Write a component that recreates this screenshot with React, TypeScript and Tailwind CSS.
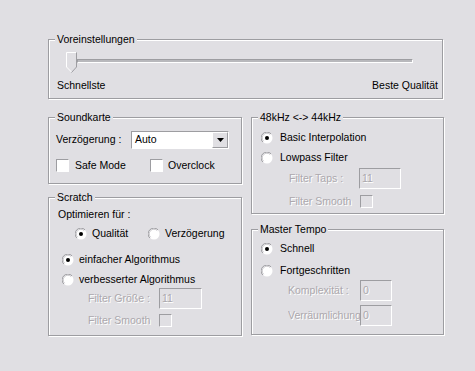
import type { ReactNode } from 'react'

const font = { fontFamily: '"Liberation Sans", Arial, sans-serif' }

function GroupBox({ title, className, children }: { title: string; className: string; children: ReactNode }) {
  return (
    <div className={`relative border border-[#9d9da1] shadow-[inset_1px_1px_0_#fff,1px_1px_0_#fff] ${className}`}>
      <span className="absolute -top-[7px] left-[6px] bg-[#e0dfe3] px-[2px] leading-[13px] text-black">{title}</span>
      {children}
    </div>
  )
}

function Radio({ checked }: { checked?: boolean }) {
  return (
    <svg width="12" height="12" viewBox="0 0 12 12" className="shrink-0">
      <circle cx="6" cy="6" r="5.5" fill="#fff" />
      <path d="M10 1.8 A5.5 5.5 0 0 0 1.8 10" fill="none" stroke="#9d9da1" strokeWidth="1" />
      <path d="M9.2 2.6 A4.5 4.5 0 0 0 2.6 9.2" fill="none" stroke="#c9c8cc" strokeWidth="1" />
      {checked && <circle cx="6" cy="6" r="2" fill="#000" />}
    </svg>
  )
}

function Check({ disabled }: { disabled?: boolean }) {
  return (
    <span
      className={`block h-[13px] w-[13px] shrink-0 border border-t-[#9d9da1] border-l-[#9d9da1] border-r-white border-b-white ${
        disabled ? 'bg-[#e0dfe3]' : 'bg-white'
      }`}
    />
  )
}

function Disabled({ children, className }: { children: ReactNode; className?: string }) {
  return (
    <span className={`text-[#aca8ad] [text-shadow:1px_1px_0_#fff] ${className ?? ''}`}>{children}</span>
  )
}

function DisabledInput({ value, w }: { value: string; w: string }) {
  return (
    <span
      className={`flex h-[21px] ${w} shrink-0 items-center border border-t-[#9d9da1] border-l-[#9d9da1] border-r-white border-b-white bg-[#e0dfe3] pl-[2px] text-[#aca8ad] [text-shadow:1px_1px_0_#fff]`}
    >
      {value}
    </span>
  )
}

function Thumb() {
  return (
    <svg width="11" height="21" viewBox="0 0 11 21" className="shrink-0">
      <polygon points="0.5,0.5 10.5,0.5 10.5,15 5.5,20.5 0.5,15" fill="#e0dfe3" stroke="none" />
      <polyline points="5.5,20 0.5,15 0.5,0.5 10,0.5" fill="none" stroke="#fff" strokeWidth="1" />
      <polyline points="10.5,0.5 10.5,15 5.5,20.5" fill="none" stroke="#9d9da1" strokeWidth="1" />
    </svg>
  )
}

export default function App() {
  return (
    <div
      className="flex h-[371px] w-[475px] flex-col bg-[#e0dfe3] pl-[48px] pt-[39px] text-[10.5px] leading-[13px] text-black"
      style={font}
    >
      {/* Voreinstellungen */}
      <GroupBox title="Voreinstellungen" className="h-[60px] w-[395px]">
        <div className="flex h-[21px] pl-[17px] mt-[12px]">
          <Thumb />
          <div className="mt-[7px] h-[4px] w-[336px] border border-t-[#9d9da1] border-l-[#9d9da1] border-r-white border-b-white bg-[#b8b8bc]" />
        </div>
        <div className="mt-[6px] flex h-[13px] justify-between pl-[8px] pr-[4px]">
          <span>Schnellste</span>
          <span>Beste Qualität</span>
        </div>
      </GroupBox>

      <div className="mt-[18px] flex gap-[9px]">
        {/* left column */}
        <div className="flex w-[194px] flex-col gap-[13px]">
          <GroupBox title="Soundkarte" className="h-[67px]">
            <div className="mt-[13px] flex h-[17px] items-center pl-[7px]">
              <span className="w-[75px] shrink-0">Verzögerung :</span>
              <div className="flex h-[18px] w-[98px] items-center border border-t-[#9d9da1] border-l-[#9d9da1] border-r-white border-b-white bg-white">
                <span className="flex-1 pl-[3px]">Auto</span>
                <span className="flex h-[16px] w-[16px] items-center justify-center border border-t-white border-l-white border-r-[#9d9da1] border-b-[#9d9da1] bg-[#e0dfe3]">
                  <svg width="7" height="4" viewBox="0 0 7 4">
                    <polygon points="0,0 7,0 3.5,4" fill="#000" />
                  </svg>
                </span>
              </div>
            </div>
            <div className="mt-[11px] flex h-[13px] items-center pl-[7px]">
              <span className="flex w-[94px] items-center gap-[6px]">
                <Check />
                <span>Safe Mode</span>
              </span>
              <span className="flex items-center gap-[5px]">
                <Check />
                <span>Overclock</span>
              </span>
            </div>
          </GroupBox>

          <GroupBox title="Scratch" className="h-[139px]">
            <div className="mt-[10px] h-[13px] pl-[9px]">Optimieren für :</div>
            <div className="mt-[6px] flex h-[13px] items-center pl-[26px]">
              <span className="flex w-[73px] items-center gap-[5px]">
                <Radio checked />
                <span>Qualität</span>
              </span>
              <span className="flex items-center gap-[5px]">
                <Radio />
                <span>Verzögerung</span>
              </span>
            </div>
            <div className="mt-[13px] flex h-[13px] items-center gap-[5px] pl-[13px]">
              <Radio checked />
              <span>einfacher Algorithmus</span>
            </div>
            <div className="mt-[7px] flex h-[13px] items-center gap-[5px] pl-[13px]">
              <Radio />
              <span>verbesserter Algorithmus</span>
            </div>
            <div className="mt-[2px] flex h-[21px] items-center pl-[39px]">
              <Disabled className="w-[71px] shrink-0">Filter Größe :</Disabled>
              <DisabledInput value="11" w="w-[43px]" />
            </div>
            <div className="mt-[5px] flex h-[13px] items-center pl-[39px]">
              <Disabled className="w-[71px] shrink-0">Filter Smooth</Disabled>
              <Check disabled />
            </div>
          </GroupBox>
        </div>

        {/* right column */}
        <div className="flex w-[193px] flex-col gap-[15px]">
          <GroupBox title="48kHz <-> 44kHz" className="h-[97px]">
            <div className="mt-[13px] flex h-[13px] items-center gap-[7px] pl-[9px]">
              <Radio checked />
              <span>Basic Interpolation</span>
            </div>
            <div className="mt-[7px] flex h-[13px] items-center gap-[7px] pl-[9px]">
              <Radio />
              <span>Lowpass Filter</span>
            </div>
            <div className="mt-[4px] flex h-[21px] items-center pl-[37px]">
              <Disabled className="w-[70px] shrink-0">Filter Taps :</Disabled>
              <DisabledInput value="11" w="w-[42px]" />
            </div>
            <div className="mt-[6px] flex h-[13px] items-center pl-[37px]">
              <Disabled className="w-[71px] shrink-0">Filter Smooth</Disabled>
              <Check disabled />
            </div>
          </GroupBox>

          <GroupBox title="Master Tempo" className="h-[106px]">
            <div className="mt-[12px] flex h-[13px] items-center gap-[7px] pl-[9px]">
              <Radio checked />
              <span>Schnell</span>
            </div>
            <div className="mt-[9px] flex h-[13px] items-center gap-[7px] pl-[9px]">
              <Radio />
              <span>Fortgeschritten</span>
            </div>
            <div className="mt-[3px] flex h-[21px] items-center pl-[36px]">
              <Disabled className="w-[72px] shrink-0 overflow-hidden whitespace-nowrap">Komplexität :</Disabled>
              <DisabledInput value="0" w="w-[32px]" />
            </div>
            <div className="mt-[4px] flex h-[21px] items-center pl-[36px]">
              <Disabled className="w-[72px] shrink-0 overflow-hidden whitespace-nowrap">Verräumlichung</Disabled>
              <DisabledInput value="0" w="w-[32px]" />
            </div>
          </GroupBox>
        </div>
      </div>
    </div>
  )
}
